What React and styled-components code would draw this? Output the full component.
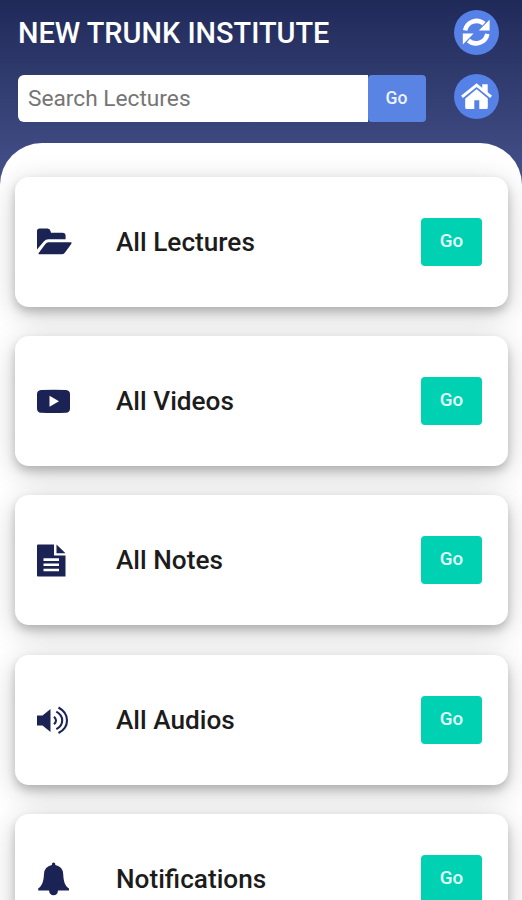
import React from 'react';
import styled, { createGlobalStyle } from 'styled-components';

const GlobalStyle = createGlobalStyle`
  * { box-sizing: border-box; }
  body { margin: 0; background: #fff; overflow: hidden; }
  body, input, button { font-family: Roboto, "Liberation Sans", sans-serif; }
`;

const Page = styled.div`
  height: 900px;
  overflow: hidden;
  background: linear-gradient(#202a59 0, #445089 180px, #445089 190px, #fff 190px);
`;

const Header = styled.header`
  height: 143px;
  padding: 10px 23px 0 18px;
  display: flex;
  justify-content: space-between;
`;

const HeaderMain = styled.div`
  width: 408px;
`;

const Title = styled.h1`
  margin: 0;
  height: 64px;
  font-size: 28.9px;
  font-weight: 500;
  line-height: 46px;
  color: #fff;
  white-space: nowrap;
`;

const SearchForm = styled.form`
  display: flex;
  height: 48px;
  padding-top: 1px;
`;

const SearchInput = styled.input`
  width: 350px;
  height: 47px;
  padding: 0 10px;
  border: 0;
  border-radius: 6px 0 0 6px;
  background: #fff;
  font-size: 22.7px;
  &::placeholder { color: #757575; opacity: 1; }
`;

const SearchButton = styled.button`
  width: 58px;
  height: 47px;
  padding: 0 1px 2px 0;
  border: 0;
  border-radius: 4px;
  background: #5984e4;
  color: #edf3ff;
  font-size: 17.6px;
  font-weight: 500;
`;

const HeaderActions = styled.div`
  display: flex;
  flex-direction: column;
  gap: 19px;
`;

const RoundButton = styled.button`
  width: 45px;
  height: 45px;
  padding: 0;
  border: 0;
  border-radius: 50%;
  background: #5681e6;
  color: #fff;
  svg { display: block; }
`;

const Panel = styled.main`
  height: 757px;
  padding: 34px 14px 0 15px;
  border-radius: 42px 42px 0 0;
  background: #fff;
  overflow: hidden;
  display: flex;
  flex-direction: column;
  gap: 29.2px;
`;

const Card = styled.section`
  flex: 0 0 130px;
  padding: 0 26px 0 22px;
  border-radius: 14px;
  background: #fff;
  box-shadow: 0 5px 10px rgba(0, 0, 0, 0.2), 0 7px 30px rgba(0, 0, 0, 0.2);
  display: flex;
  align-items: center;
`;

const IconSlot = styled.div`
  width: 79px;
  height: 36px;
  color: #1b2355;
  display: flex;
  align-items: center;
  svg { display: block; }
`;

const Label = styled.h2`
  flex: 1;
  margin: 0;
  font-size: 26.2px;
  font-weight: 500;
  line-height: 30px;
  color: #1c1c1c;
`;

const GoButton = styled.button`
  width: 61px;
  height: 48px;
  padding: 0 0 2px;
  border: 0;
  border-radius: 4px;
  background: #00d1b2;
  color: #e5fffa;
  font-size: 18.8px;
  font-weight: 500;
`;

const RefreshIcon = () => (
  <svg width="45" height="45" viewBox="0 0 45 45">
    <g id="refresh-arrow">
      <path fill="none" stroke="#fff" strokeWidth="4.6" d="M11.1 20.4A11.5 11.5 0 0 1 30 13.8" />
      <path fill="#fff" d="M35.6 9.8V20.6H24.8Z" />
    </g>
    <use href="#refresh-arrow" transform="rotate(180 22.2 22.1)" />
  </svg>
);

const HomeIcon = () => (
  <svg width="45" height="45" viewBox="0 0 45 45">
    <path fill="#fff" d="M22.6 13.8L33.8 23.4V33.5Q33.8 35 32.3 35H25.3V26.3H20.3V35H12.7Q11.2 35 11.2 33.5V23.4Z" />
    <path fill="none" stroke="#5681e6" strokeWidth="5" d="M8.3 23.9L22.6 11.8L36.9 23.9" />
    <path fill="none" stroke="#fff" strokeWidth="3" d="M8 22.8L22.6 11.1L37.1 22.8" />
    <path fill="#fff" d="M28.2 10.2H33.7V20L28.2 15.6Z" />
  </svg>
);

const FolderIcon = () => (
  <svg width="36" height="36" viewBox="0 0 36 36" fill="currentColor">
    <path d="M0 25.5V7Q0 4.5 2.5 4.5H10.5Q13 4.5 13.5 7L14 8.7H25.5Q28.6 8.7 28.6 12V15.2H11.5Q8.7 15.2 6.8 17.5Z" />
    <path d="M11.5 18.3H33.5Q35.3 18.3 34.4 19.7L28 28.4Q26.6 30.3 24.5 30.3H2.2Q.8 30.3 1.7 29L8.2 20.2Q9.6 18.3 11.5 18.3Z" />
  </svg>
);

const VideoIcon = () => (
  <svg width="34" height="36" viewBox="0 0 34 36" fill="currentColor">
    <path fillRule="evenodd" d="M4 7Q16.5 6.5 29 7Q33 7.5 33 11V25.5Q33 29.5 29 29.8Q16.5 30.3 4 29.8Q0 29.5 0 25.5V11Q0 7.5 4 7ZM12.5 12.8V23.7L22 18.3Z" />
  </svg>
);

const NotesIcon = () => (
  <svg width="34" height="36" viewBox="0 0 34 36">
    <path fill="currentColor" d="M1 2.5H17V13.5H28.5V34.5H1Q0 34.5 0 33.5V3.5Q0 2.5 1 2.5ZM19.5 2.5L28.5 11.3H19.5Z" />
    <path stroke="#fff" strokeWidth="2.6" d="M6.5 17.6H22M6.5 22.7H22M6.5 28H22" />
  </svg>
);

const AudioIcon = () => (
  <svg width="34" height="36" viewBox="0 0 34 36" fill="none">
    <path fill="currentColor" d="M0 13.5H5.5L13.5 7V30L5.5 23.5H0Z" />
    <path stroke="currentColor" strokeWidth="2.1" d="M17 14.7Q21 18.3 17 22.3M19.3 9.7Q25.2 13 25.2 18.4Q25.2 23.8 19.3 27.2M21.5 5.5Q30 10.2 30 18.4Q30 26.6 21.5 31" />
  </svg>
);

const BellIcon = () => (
  <svg width="34" height="36" viewBox="0 0 34 36" fill="currentColor">
    <path d="M14.8 4Q14.8 1.6 16.6 1.6T18.4 4Q25.8 5.5 26.2 13C26.6 21 28 24.5 32 27.6V29.5H21Q20.6 34.3 16.6 34.3T12 29.5H1.2V27.6C5 24.5 6.6 21 7 13Q7.4 5.5 14.8 4Z" />
  </svg>
);

const ITEMS = [
  { label: 'All Lectures', icon: <FolderIcon /> },
  { label: 'All Videos', icon: <VideoIcon /> },
  { label: 'All Notes', icon: <NotesIcon /> },
  { label: 'All Audios', icon: <AudioIcon /> },
  { label: 'Notifications', icon: <BellIcon /> },
];

export default function App() {
  return (
    <Page>
      <GlobalStyle />
      <Header>
        <HeaderMain>
          <Title>NEW TRUNK INSTITUTE</Title>
          <SearchForm>
            <SearchInput placeholder="Search Lectures" />
            <SearchButton type="button">Go</SearchButton>
          </SearchForm>
        </HeaderMain>
        <HeaderActions>
          <RoundButton aria-label="Refresh"><RefreshIcon /></RoundButton>
          <RoundButton aria-label="Home"><HomeIcon /></RoundButton>
        </HeaderActions>
      </Header>
      <Panel>
        {ITEMS.map(({ label, icon }) => (
          <Card key={label}>
            <IconSlot>{icon}</IconSlot>
            <Label>{label}</Label>
            <GoButton>Go</GoButton>
          </Card>
        ))}
      </Panel>
    </Page>
  );
}
